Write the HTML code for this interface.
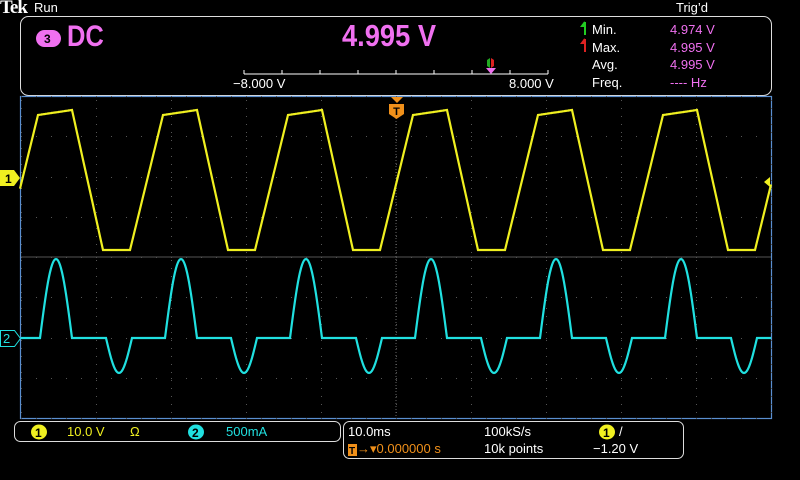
<!DOCTYPE html>
<html><head><meta charset="utf-8"><style>
body{margin:0;background:#000;width:800px;height:480px;overflow:hidden;position:relative;font-family:"Liberation Sans",sans-serif;color:#fff}
.a{position:absolute;white-space:nowrap}
.m{color:#f070f0}
</style></head><body>
<svg class="a" style="left:0;top:0" width="800" height="480">
<rect x="20.5" y="16.5" width="751" height="79" rx="8" fill="none" stroke="#ddd" stroke-width="1"/>
<rect x="20.5" y="96.5" width="751" height="322" fill="none" stroke="#5a8fd0" stroke-width="1.2"/>
<g id="grid"></g>
<line x1="21" y1="257" x2="771" y2="257" stroke="#555" stroke-width="1"/>
<line x1="396" y1="118" x2="396" y2="418" stroke="#666" stroke-width="1" stroke-dasharray="1,2"/>
<line x1="244" y1="74" x2="548" y2="74" stroke="#fff"/>
<g stroke="#fff"><line x1="244" y1="70" x2="244" y2="74"/><line x1="282" y1="70" x2="282" y2="74"/><line x1="320" y1="70" x2="320" y2="74"/><line x1="358" y1="70" x2="358" y2="74"/><line x1="396" y1="70" x2="396" y2="74"/><line x1="434" y1="70" x2="434" y2="74"/><line x1="472" y1="70" x2="472" y2="74"/><line x1="510" y1="70" x2="510" y2="74"/><line x1="548" y1="70" x2="548" y2="74"/></g>
<path d="M486 68 l5 6 l5 -6z" fill="#f070f0"/><path d="M490 58 v10 l-3 -2 v-6z" fill="#2a2"/><path d="M491 58 v10 l3-2 v-6z" fill="#d22"/>
<path d="M585 22 v13 M585 22 l-3 4 l3 0" stroke="#2c2" stroke-width="2" fill="none"/>
<path d="M585 39 v13 M585 39 l-3 4 l3 0" stroke="#d22" stroke-width="2" fill="none"/>
<path d="M391 97 h12 l-6 6z" fill="#f0901a"/>
<path d="M389 104 h15 v10 l-7.5 5 l-7.5 -5z" fill="#f0901a"/>
<text x="396.5" y="115" font-size="11" font-weight="bold" text-anchor="middle" fill="#000" font-family="Liberation Sans">T</text>
<path d="M0 170 h14 l6 8 l-6 8 h-14z" fill="#f0f020"/><text x="5" y="183" font-size="12" font-weight="bold" fill="#000">1</text>
<path d="M0.5 330.5 h14 l6 8 l-6 8 h-14z" fill="none" stroke="#20e0e0"/><text x="3" y="343" font-size="13" fill="#20e0e0">2</text>
<path d="M770 177 l-6 5 l6 5z" fill="#f0f020"/>
<polyline id="y" fill="none" stroke="#f0f020" stroke-width="2.2"/>
<polyline id="c" fill="none" stroke="#20e0e0" stroke-width="2.2"/>
<rect x="14.5" y="421.5" width="326" height="20" rx="6" fill="none" stroke="#ddd"/>
<rect x="343.5" y="421.5" width="340" height="37" rx="6" fill="none" stroke="#ddd"/>
<ellipse cx="39" cy="432" rx="8" ry="7.5" fill="#f0f020"/><text x="35" y="437" font-size="12" font-weight="bold" fill="#000">1</text>
<ellipse cx="196" cy="432" rx="8" ry="7.5" fill="#20e0e0"/><text x="192" y="437" font-size="12" font-weight="bold" fill="#000">2</text>
<ellipse cx="607" cy="432" rx="8" ry="7.5" fill="#f0f020"/><text x="603" y="437" font-size="12" font-weight="bold" fill="#000">1</text>
<rect x="348" y="444" width="9" height="12" fill="#f0901a"/><text x="349" y="454" font-size="10" font-weight="bold" fill="#000">T</text>
<rect x="36" y="30" width="25" height="17" rx="8.5" fill="#f070f0"/><text x="44" y="43" font-size="12" font-weight="bold" fill="#000">3</text>
</svg>
<div class="a" style="left:0;top:-3px;font:bold 19px 'Liberation Serif',serif;letter-spacing:-1px">Tek</div>
<div class="a" style="left:34px;top:0;font-size:13px">Run</div>
<div class="a" style="left:676px;top:0;font-size:13px">Trig’d</div>
<div class="a m" style="left:67px;top:20px;font:bold 30px 'Liberation Sans',sans-serif;transform:scaleX(.85);transform-origin:left">DC</div>
<div class="a m" style="left:342px;top:18px;font:bold 31px 'Liberation Sans',sans-serif;transform:scaleX(.88);transform-origin:left">4.995 V</div>
<div class="a" style="left:233px;top:76px;font-size:13px">−8.000 V</div>
<div class="a" style="left:509px;top:76px;font-size:13px">8.000 V</div>
<div class="a" style="left:592px;top:21px;font-size:13px;line-height:17.5px">Min.<br>Max.<br>Avg.<br>Freq.</div>
<div class="a m" style="left:670px;top:21px;font-size:13px;line-height:17.5px">4.974 V<br>4.995 V<br>4.995 V<br>---- Hz</div>
<div class="a" style="left:67px;top:424px;font-size:13px;color:#f0f020">10.0 V</div>
<div class="a" style="left:130px;top:424px;font-size:13px;color:#f0f020">Ω</div>
<div class="a" style="left:226px;top:424px;font-size:13px;color:#20e0e0">500mA</div>
<div class="a" style="left:348px;top:424px;font-size:13px">10.0ms</div>
<div class="a" style="left:484px;top:424px;font-size:13px">100kS/s</div>
<div class="a" style="left:619px;top:424px;font-size:13px">/</div>
<div class="a" style="left:484px;top:441px;font-size:13px">10k points</div>
<div class="a" style="left:593px;top:441px;font-size:13px">−1.20 V</div>
<div class="a" style="left:357px;top:441px;font-size:13px;color:#f0901a">→▾0.000000 s</div>
<script>
var g='';
for(var i=0;i<=10;i++){var x=21+i*75;for(var y=100;y<418;y+=8)g+='<rect x="'+x+'" y="'+y+'" width="1" height="1" fill="#555"/>';}
for(var j=0;j<=8;j++){var y=96+j*40.25;for(var x=21;x<771;x+=15)g+='<rect x="'+x+'" y="'+Math.round(y)+'" width="1" height="1" fill="#555"/>';}
document.getElementById('grid').innerHTML=g;
var p=[];
for(var x=20;x<=771;x++){var t=((x-5)%125+125)%125,y;
if(t<33)y=250-135*t/33;else if(t<67)y=115-5*(t-33)/34;else if(t<98)y=110+140*(t-67)/31;else y=250;
p.push(x+','+y.toFixed(1));}
document.getElementById('y').setAttribute('points',p.join(' '));
var q=[];
for(var x=21;x<=771;x++){var t=((x-40)%125+125)%125,y=338;
if(t<32)y=338-79*Math.sin(Math.PI*t/32);else if(t>=66&&t<92)y=338+35*Math.sin(Math.PI*(t-66)/26);
q.push(x+','+y.toFixed(1));}
document.getElementById('c').setAttribute('points',q.join(' '));
</script>
</body></html>
